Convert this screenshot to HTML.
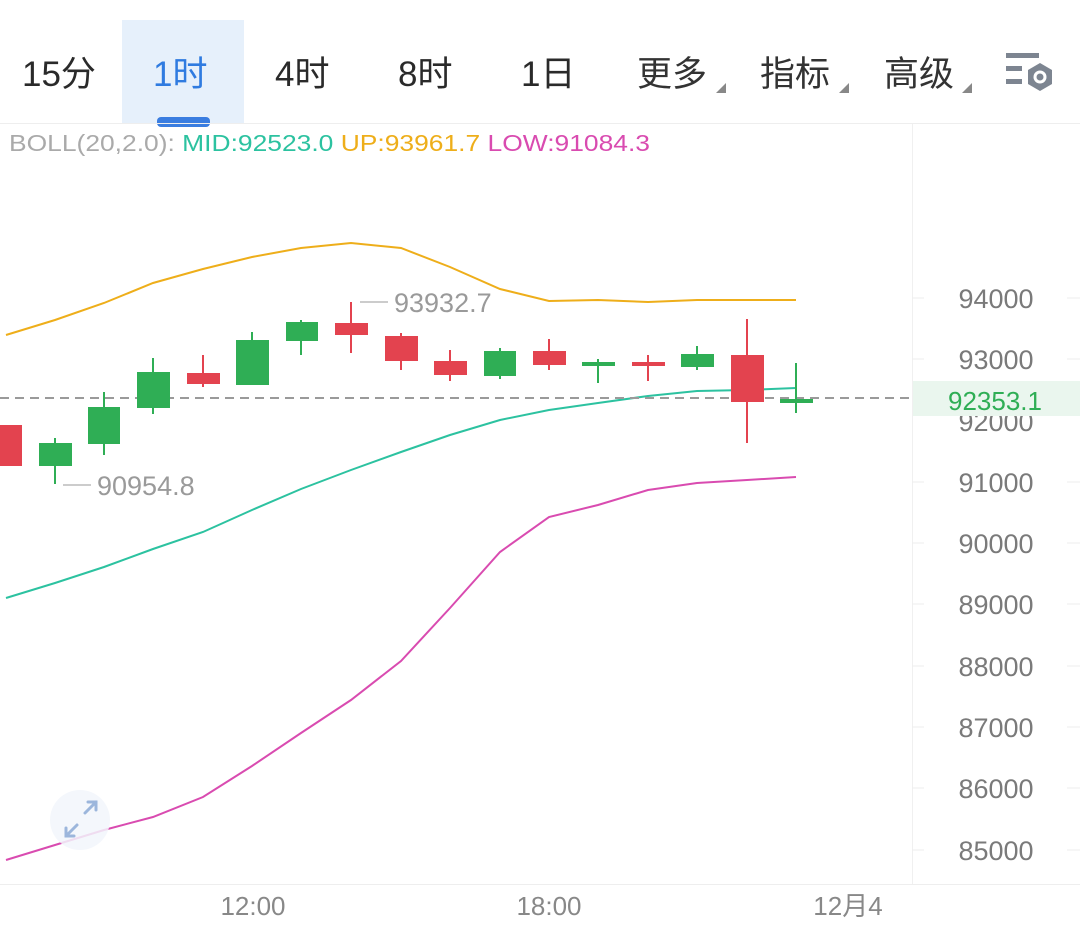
<!DOCTYPE html>
<html><head><meta charset="utf-8">
<style>
html,body{margin:0;padding:0;background:#fff;}
body{width:1080px;height:926px;overflow:hidden;position:relative;font-family:"Liberation Sans","Noto Sans CJK SC",sans-serif;}
svg{position:absolute;left:0;top:0;}
</style></head><body>
<svg width="1080" height="926" viewBox="0 0 1080 926" xmlns="http://www.w3.org/2000/svg" font-family="Liberation Sans, Noto Sans CJK SC, sans-serif">
<rect x="122" y="20" width="122" height="103" fill="#e6f0fb"/>
<rect x="157" y="117" width="53" height="10" rx="4" fill="#3a7de0"/>
<line x1="0" y1="123.5" x2="1080" y2="123.5" stroke="#eeeeee" stroke-width="1"/>
<g font-size="35" fill="#2a2a2a">
<text x="22" y="86">15分</text>
<text x="153" y="86" fill="#2f7be0">1时</text>
<text x="275" y="86">4时</text>
<text x="398" y="86">8时</text>
<text x="521" y="86">1日</text>
<text x="637" y="86" fill="#333">更多</text>
<text x="760" y="86" fill="#333">指标</text>
<text x="884" y="86" fill="#333">高级</text>
</g>
<g fill="#888">
<polygon points="716,93 726,83 726,93"/>
<polygon points="839,93 849,83 849,93"/>
<polygon points="962,93 972,83 972,93"/>
</g>
<g fill="#7d8591">
<rect x="1006" y="53" width="33" height="5"/>
<rect x="1006" y="66" width="16" height="5"/>
<rect x="1006" y="79" width="16" height="5"/>
<polygon points="1040,63 1052,70 1052,84 1040,91 1028,84 1028,70"/>
</g>
<circle cx="1040" cy="77" r="6.5" fill="#fff"/>
<circle cx="1040" cy="77" r="3.5" fill="#7d8591"/>
<text x="9" y="151" font-size="23" textLength="641" lengthAdjust="spacingAndGlyphs"><tspan fill="#aaaaaa">BOLL(20,2.0): </tspan><tspan fill="#2cc2a0">MID:92523.0 </tspan><tspan fill="#eeae1a">UP:93961.7 </tspan><tspan fill="#d94bb0">LOW:91084.3</tspan></text>
<line x1="912.5" y1="124" x2="912.5" y2="884" stroke="#f0f0f0"/>
<line x1="0" y1="884.5" x2="1080" y2="884.5" stroke="#eeeeee"/>
<g stroke="#eeeeee">
<line x1="912" y1="298" x2="924" y2="298"/><line x1="1067" y1="298" x2="1080" y2="298"/>
<line x1="912" y1="359" x2="924" y2="359"/><line x1="1067" y1="359" x2="1080" y2="359"/>
<line x1="912" y1="482" x2="924" y2="482"/><line x1="1067" y1="482" x2="1080" y2="482"/>
<line x1="912" y1="543" x2="924" y2="543"/><line x1="1067" y1="543" x2="1080" y2="543"/>
<line x1="912" y1="604" x2="924" y2="604"/><line x1="1067" y1="604" x2="1080" y2="604"/>
<line x1="912" y1="666" x2="924" y2="666"/><line x1="1067" y1="666" x2="1080" y2="666"/>
<line x1="912" y1="727" x2="924" y2="727"/><line x1="1067" y1="727" x2="1080" y2="727"/>
<line x1="912" y1="788" x2="924" y2="788"/><line x1="1067" y1="788" x2="1080" y2="788"/>
<line x1="912" y1="850" x2="924" y2="850"/><line x1="1067" y1="850" x2="1080" y2="850"/>
</g>
<g font-size="27" fill="#7a7a7a" text-anchor="middle">
<text x="996" y="308">94000</text>
<text x="996" y="369">93000</text>
<text x="996" y="431">92000</text>
<text x="996" y="492">91000</text>
<text x="996" y="553">90000</text>
<text x="996" y="614">89000</text>
<text x="996" y="676">88000</text>
<text x="996" y="737">87000</text>
<text x="996" y="798">86000</text>
<text x="996" y="860">85000</text>
</g>
<rect x="913" y="381" width="167" height="35" fill="#eaf6ee"/>
<text x="995" y="410" font-size="26" fill="#2fae55" text-anchor="middle">92353.1</text>
<g font-size="26" fill="#888" text-anchor="middle">
<text x="253" y="915">12:00</text>
<text x="549" y="915">18:00</text>
<text x="848" y="915">12月4</text>
</g>
<g fill="none" stroke-width="2">
<polyline stroke="#eeae1a" points="6,335 55,320 104,303 153,283 203,269 252,257 301,248 351,243 401,248 450,267 500,289 549,301 598,300 648,302 697,300 747,300 796,300"/>
<polyline stroke="#2cc2a0" points="6,598 55,583 104,567 153,549 203,532 252,510 301,489 351,470 401,452 450,435 500,420 549,410 598,403 648,396 697,391 747,390 796,388"/>
<polyline stroke="#d94bb0" points="6,860 55,845 104,830 153,817 203,797 252,766 301,733 351,700 401,661 450,608 500,552 549,517 598,505 648,490 697,483 747,480 796,477"/>
</g>
<line x1="0" y1="398" x2="912" y2="398" stroke="#9a9a9a" stroke-width="2" stroke-dasharray="9,6"/>
<g stroke-width="2">
<g fill="#e3434f" stroke="#e3434f">
<rect x="0" y="425" width="22" height="41" stroke="none"/>
<line x1="203" y1="355" x2="203" y2="387"/><rect x="187" y="373" width="33" height="11" stroke="none"/>
<line x1="351" y1="302" x2="351" y2="353"/><rect x="335" y="323" width="33" height="12" stroke="none"/>
<line x1="401" y1="333" x2="401" y2="370"/><rect x="385" y="336" width="33" height="25" stroke="none"/>
<line x1="450" y1="350" x2="450" y2="381"/><rect x="434" y="361" width="33" height="14" stroke="none"/>
<line x1="549" y1="339" x2="549" y2="370"/><rect x="533" y="351" width="33" height="14" stroke="none"/>
<line x1="648" y1="355" x2="648" y2="381"/><rect x="632" y="362" width="33" height="4" stroke="none"/>
<line x1="747" y1="319" x2="747" y2="443"/><rect x="731" y="355" width="33" height="47" stroke="none"/>
</g>
<g fill="#2fae55" stroke="#2fae55">
<line x1="55" y1="438" x2="55" y2="484"/><rect x="39" y="443" width="33" height="23" stroke="none"/>
<line x1="104" y1="392" x2="104" y2="455"/><rect x="88" y="407" width="32" height="37" stroke="none"/>
<line x1="153" y1="358" x2="153" y2="414"/><rect x="137" y="372" width="33" height="36" stroke="none"/>
<line x1="252" y1="332" x2="252" y2="385"/><rect x="236" y="340" width="33" height="45" stroke="none"/>
<line x1="301" y1="320" x2="301" y2="355"/><rect x="286" y="322" width="32" height="19" stroke="none"/>
<line x1="500" y1="348" x2="500" y2="379"/><rect x="484" y="351" width="32" height="25" stroke="none"/>
<line x1="598" y1="359" x2="598" y2="383"/><rect x="582" y="362" width="33" height="4" stroke="none"/>
<line x1="697" y1="346" x2="697" y2="370"/><rect x="681" y="354" width="33" height="13" stroke="none"/>
<line x1="796" y1="363" x2="796" y2="413"/><rect x="780" y="399" width="33" height="4" stroke="none"/>
</g>
</g>
<line x1="360" y1="302" x2="388" y2="302" stroke="#bbb" stroke-width="1.5"/>
<text x="394" y="312" font-size="27" fill="#9a9a9a">93932.7</text>
<line x1="63" y1="485" x2="91" y2="485" stroke="#bbb" stroke-width="1.5"/>
<text x="97" y="495" font-size="27" fill="#9a9a9a">90954.8</text>
<circle cx="80" cy="820" r="30" fill="#f2f6fb" opacity="0.85"/>
<g stroke="#9cb6dc" stroke-width="3" fill="none" stroke-linecap="round">
<path d="M85 813 L96 802 M88 802 L96 802 L96 810"/>
<path d="M77 825 L66 836 M66 828 L66 836 L74 836"/>
</g>
</svg>
</body></html>
